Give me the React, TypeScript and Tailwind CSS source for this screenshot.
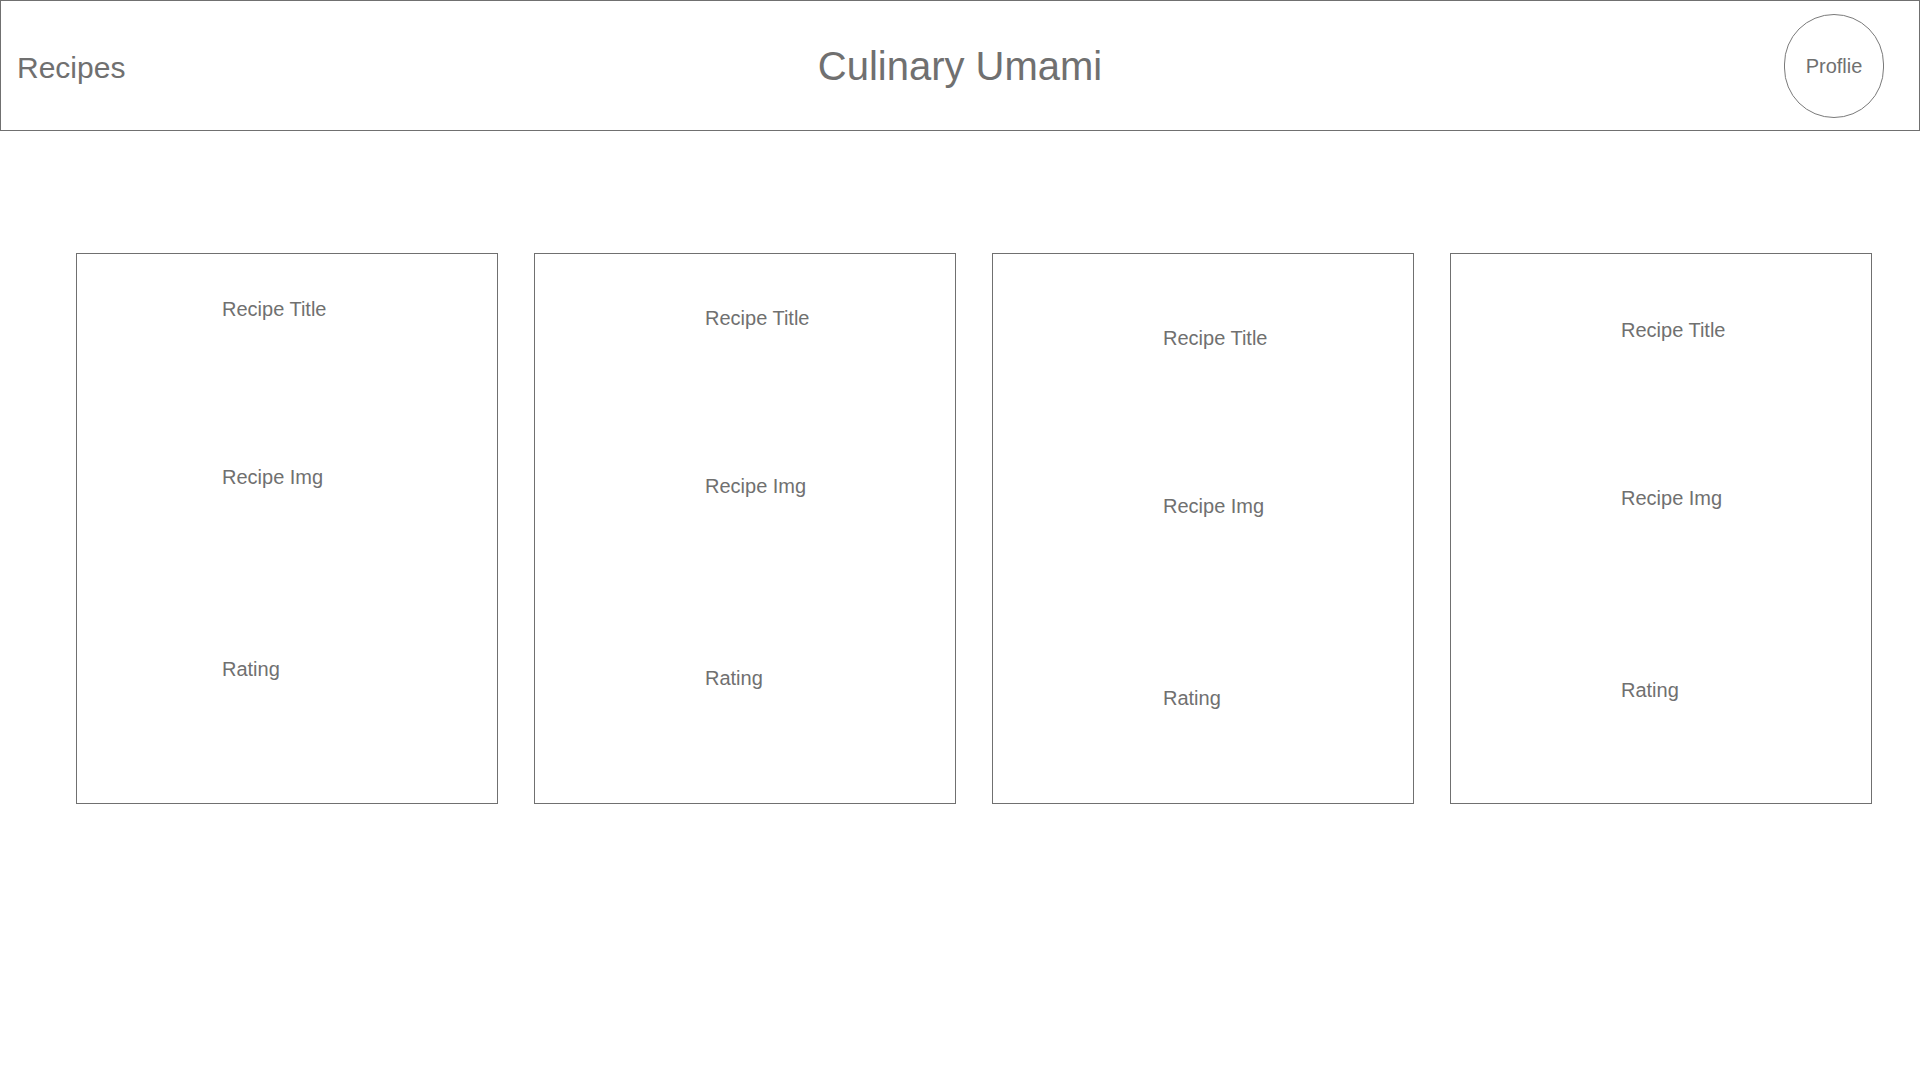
const cards = [
  { pl: 'pl-[145px]', pt: 'pt-[44px]' },
  { pl: 'pl-[170px]', pt: 'pt-[53px]' },
  { pl: 'pl-[170px]', pt: 'pt-[73px]' },
  { pl: 'pl-[170px]', pt: 'pt-[65px]' },
]

export default function App() {
  return (
    <div className="min-h-screen bg-white text-[#707070] font-['Liberation_Sans',Arial,sans-serif]">
      <header className="grid grid-cols-[1fr_auto_1fr] items-center h-[131px] border border-[#707070]">
        <div className="pl-4 mt-1 text-[30px] leading-[34px]">Recipes</div>
        <h1 className="text-[40px] leading-[46px] font-normal">Culinary Umami</h1>
        <div className="flex justify-end pr-[35px]">
          <div className="w-[100px] h-[104px] rounded-full border border-[#7a7a7a] flex items-center justify-center text-[20px]">
            Proflie
          </div>
        </div>
      </header>

      <main className="flex gap-[36px] pl-[76px] pt-[122px]">
        {cards.map((card, i) => (
          <RecipeCard key={i} pl={card.pl} pt={card.pt} />
        ))}
      </main>
    </div>
  )
}

function RecipeCard({ pl, pt }: { pl: string; pt: string }) {
  return (
    <div className={`w-[422px] h-[551px] border border-[#707070] flex flex-col text-[20px] leading-[23px] ${pl} ${pt}`}>
      <p>Recipe Title</p>
      <p className="mt-[145px]">Recipe Img</p>
      <p className="mt-[169px]">Rating</p>
    </div>
  )
}
